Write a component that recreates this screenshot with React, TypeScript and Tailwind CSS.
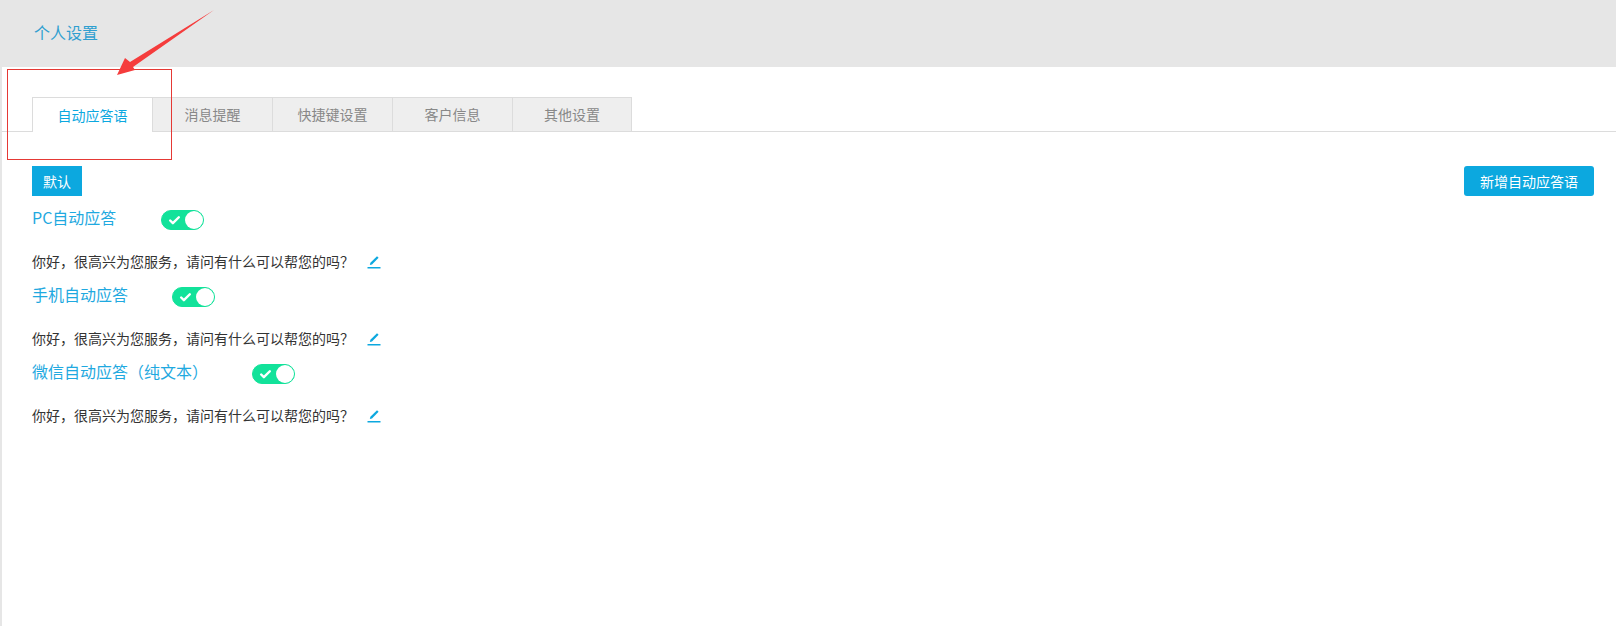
import { Check } from "lucide-react";

const tabs = ["自动应答语", "消息提醒", "快捷键设置", "客户信息", "其他设置"];

const replies = [
  { title: "PC自动应答", gap: "ml-[45px]" },
  { title: "手机自动应答", gap: "ml-[44px]" },
  { title: "微信自动应答（纯文本）", gap: "ml-[44px]" },
];

const message = "你好，很高兴为您服务，请问有什么可以帮您的吗？";

function Toggle() {
  return (
    <div className="flex h-[20px] w-[43px] items-center rounded-full border border-[#12e29a] bg-[#12e29a]">
      <Check className="ml-[6px] h-[13px] w-[13px] text-white" strokeWidth={4.5} />
      <div className="ml-auto h-[18px] w-[18px] rounded-full bg-white" />
    </div>
  );
}

function EditIcon() {
  return (
    <svg width="14" height="14" viewBox="0 0 14 14" className="text-[#0ca8df]">
      <path d="M3.4 7.8 10 1.2l1.6 1.6-6.6 6.6-2.2.6z" fill="currentColor" />
      <rect x="0.5" y="12" width="13" height="1.5" fill="currentColor" />
    </svg>
  );
}

export default function App() {
  return (
    <div className="relative h-[626px] w-[1616px] overflow-hidden border-l-2 border-[#e6e6e6] bg-white font-['Noto_Sans_CJK_SC',sans-serif]">
      <div className="flex h-[67px] items-center bg-[#e6e6e6] pb-[4px] pl-[32px] text-[16px] text-[#2f9fd0]">
        个人设置
      </div>

      <div className="mt-[30px] flex h-[35px] border-b border-[#dcdcdc] pl-[30px]">
        {tabs.map((tab, i) => (
          <div
            key={tab}
            className={
              i === 0
                ? "flex h-[35px] w-[121px] items-center justify-center border-x border-t border-[#dcdcdc] bg-white text-[14px] text-[#0ca8df]"
                : i === 4
                  ? "flex h-[34px] w-[119px] items-center justify-center border-t border-r border-[#dcdcdc] bg-[#eeeeee] text-[14px] text-[#888888]"
                  : "flex h-[34px] w-[120px] items-center justify-center border-t border-r border-[#dcdcdc] bg-[#eeeeee] text-[14px] text-[#888888]"
            }
          >
            {tab}
          </div>
        ))}
      </div>

      <div className="px-[30px] pt-[34px]">
        <div className="flex items-center justify-between">
          <button className="h-[30px] w-[50px] bg-[#0ca8df] text-[14px] text-white">默认</button>
          <button className="mr-[-8px] h-[30px] w-[130px] rounded-[3px] bg-[#0ca8df] text-[14px] text-white">
            新增自动应答语
          </button>
        </div>

        {replies.map((r) => (
          <div key={r.title} className="h-[77px]">
            <div className="flex h-[53px] items-start pt-[9px]">
              <span className="text-[16px] leading-[24px] text-[#1fa9e0]">{r.title}</span>
              <div className={`${r.gap} mt-[5px]`}>
                <Toggle />
              </div>
            </div>
            <div className="flex h-[24px] items-center">
              <span className="text-[14px] text-[#333333]">{message}</span>
              <span className="ml-[13px] mt-[2px]">
                <EditIcon />
              </span>
            </div>
          </div>
        ))}
      </div>

      <div className="absolute left-[5px] top-[69px] h-[91px] w-[165px] border border-[#e53935]" />
      <svg className="absolute left-[-2px] top-0" width="240" height="90" viewBox="0 0 240 90">
        <path d="M214 10 130 62 125 58 117 75 135 70 133 67z" fill="#f53c3c" />
      </svg>
    </div>
  );
}
